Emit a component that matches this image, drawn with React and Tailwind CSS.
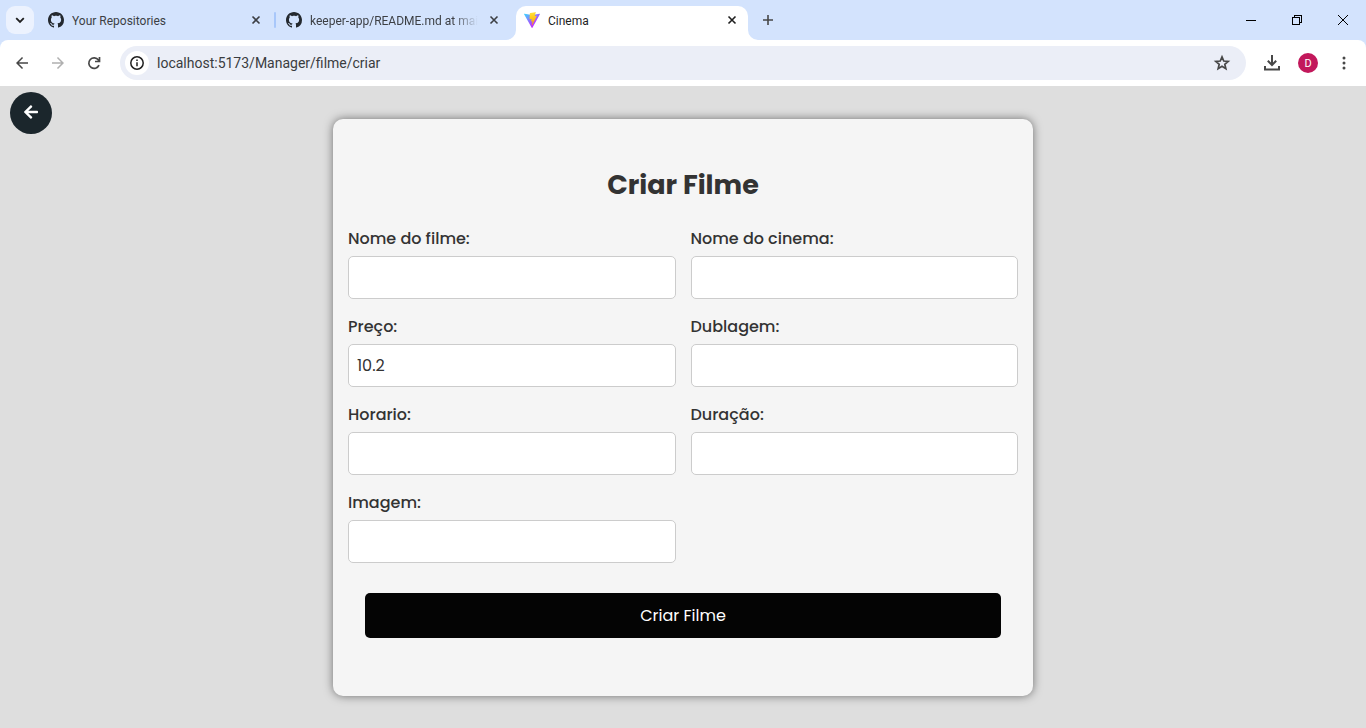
import { useState } from "react";
import { FaArrowLeft } from "react-icons/fa";
import { MdArrowBack, MdArrowForward } from "react-icons/md";

function GithubMark() {
  return (
    <svg viewBox="0 0 16 16" className="size-4 shrink-0" fill="#24292f" aria-hidden="true">
      <path d="M8 0C3.58 0 0 3.58 0 8c0 3.54 2.29 6.53 5.47 7.59.4.07.55-.17.55-.38 0-.19-.01-.82-.01-1.49-2.01.37-2.53-.49-2.69-.94-.09-.23-.48-.94-.82-1.13-.28-.15-.68-.52-.01-.53.63-.01 1.08.58 1.23.82.72 1.21 1.87.87 2.33.66.07-.52.28-.87.51-1.07-1.78-.2-3.64-.89-3.64-3.95 0-.87.31-1.59.82-2.15-.08-.2-.36-1.02.08-2.12 0 0 .67-.21 2.2.82.64-.18 1.32-.27 2-.27.68 0 1.36.09 2 .27 1.53-1.04 2.2-.82 2.2-.82.44 1.1.16 1.92.08 2.12.51.56.82 1.27.82 2.15 0 3.07-1.87 3.75-3.65 3.95.29.25.54.73.54 1.48 0 1.07-.01 1.93-.01 2.2 0 .21.15.46.55.38A8.013 8.013 0 0 0 16 8c0-4.42-3.58-8-8-8z" />
    </svg>
  );
}

function ViteLogo() {
  return (
    <svg viewBox="0 0 256 257" className="size-4 shrink-0" aria-hidden="true">
      <defs>
        <linearGradient id="vite-body" x1="-.828%" x2="57.636%" y1="7.652%" y2="78.411%">
          <stop offset="0%" stopColor="#41D1FF" />
          <stop offset="100%" stopColor="#BD34FE" />
        </linearGradient>
        <linearGradient id="vite-bolt" x1="43.376%" x2="50.316%" y1="2.242%" y2="89.03%">
          <stop offset="0%" stopColor="#FFEA83" />
          <stop offset="8.333%" stopColor="#FFDD35" />
          <stop offset="100%" stopColor="#FFA800" />
        </linearGradient>
      </defs>
      <path
        fill="url(#vite-body)"
        d="M255.153 37.938L134.897 252.976c-2.483 4.44-8.862 4.466-11.382.048L.875 37.958c-2.746-4.814 1.371-10.646 6.827-9.67l120.385 21.517a6.537 6.537 0 0 0 2.322-.004l117.867-21.483c5.438-.991 9.574 4.796 6.877 9.62Z"
      />
      <path
        fill="url(#vite-bolt)"
        d="M185.432.063L96.44 17.501a3.268 3.268 0 0 0-2.634 3.014l-5.474 92.456a3.268 3.268 0 0 0 3.997 3.378l24.777-5.718c2.318-.535 4.413 1.507 3.936 3.838l-7.361 36.047c-.495 2.426 1.782 4.5 4.151 3.78l15.304-4.649c2.372-.72 4.652 1.36 4.15 3.788l-11.698 56.621c-.732 3.542 3.979 5.473 5.943 2.437l1.313-2.028l72.516-144.72c1.215-2.423-.88-5.186-3.54-4.672l-25.505 4.922c-2.396.462-4.435-1.77-3.759-4.114l16.646-57.705c.677-2.35-1.37-4.583-3.769-4.113Z"
      />
    </svg>
  );
}

function CloseIcon() {
  return (
    <svg viewBox="0 0 16 16" className="size-4" fill="none" stroke="currentColor" strokeWidth="1.6" aria-hidden="true">
      <path d="M4.5 4.5l7 7M11.5 4.5l-7 7" />
    </svg>
  );
}

function Flare({ className }) {
  return (
    <svg viewBox="0 0 10 10" className={className} fill="#ffffff" aria-hidden="true">
      <path d="M10 0v10H0A10 10 0 0 0 10 0z" />
    </svg>
  );
}

function BrowserTab({ icon, title, active = false, fade = false }) {
  return (
    <div
      className={
        active
          ? "relative flex h-[34px] w-[232px] items-center rounded-t-[10px] bg-white px-2 pb-1.5 text-[#1f1f1f]"
          : "flex h-[34px] w-[232px] items-center px-2 pb-1.5 text-[#3c3f44]"
      }
    >
      {active && <Flare className="absolute bottom-0 -left-2.5 size-2.5" />}
      {active && <Flare className="absolute -right-2.5 bottom-0 size-2.5 -scale-x-100" />}
      {icon}
      <span
        className={
          fade
            ? "ml-2 flex-1 overflow-hidden pt-px text-xs whitespace-nowrap [mask-image:linear-gradient(to_right,black_85%,transparent)]"
            : "ml-2 flex-1 overflow-hidden pt-px text-xs whitespace-nowrap"
        }
      >
        {title}
      </span>
      <button type="button" aria-label="Fechar guia" className="ml-2 flex size-4 items-center justify-center">
        <CloseIcon />
      </button>
    </div>
  );
}

function TabStrip() {
  return (
    <div className="flex h-10 items-end bg-[#d3e3fd] pl-1.5">
      <button
        type="button"
        aria-label="Pesquisar guias"
        className="mr-1.5 mb-1.5 flex size-7 items-center justify-center rounded-[9px] bg-[#ecf2fe] text-[#1f1f1f]"
      >
        <svg viewBox="0 0 16 16" className="size-4" fill="none" stroke="currentColor" strokeWidth="1.8" aria-hidden="true">
          <path d="M4.2 6.2L8 10l3.8-3.8" />
        </svg>
      </button>
      <BrowserTab icon={<GithubMark />} title="Your Repositories" />
      <div className="mx-0.5 mb-3 h-4 w-0.5 rounded-full bg-[#a8c7fa]" />
      <BrowserTab icon={<GithubMark />} title="keeper-app/README.md at mai" fade />
      <div className="w-1.5" />
      <BrowserTab icon={<ViteLogo />} title="Cinema" active />
      <button type="button" aria-label="Nova guia" className="mb-1.5 ml-1.5 flex size-7 items-center justify-center text-[#474747]">
        <svg viewBox="0 0 16 16" className="size-4" fill="none" stroke="currentColor" strokeWidth="1.6" aria-hidden="true">
          <path d="M8 3v10M3 8h10" />
        </svg>
      </button>
      <div className="ml-auto flex self-stretch text-black">
        <button type="button" aria-label="Minimizar" className="flex w-[46px] items-center justify-center">
          <svg viewBox="0 0 10 10" className="size-2.5" fill="none" stroke="currentColor" shapeRendering="crispEdges" aria-hidden="true">
            <path d="M0 5.5h10" />
          </svg>
        </button>
        <button type="button" aria-label="Restaurar" className="flex w-[46px] items-center justify-center">
          <svg viewBox="0 0 10 10" className="size-2.5" fill="none" stroke="currentColor" shapeRendering="crispEdges" aria-hidden="true">
            <path d="M.5 2.5h7v7h-7zM2.5 2.5v-2h7v7h-2" />
          </svg>
        </button>
        <button type="button" aria-label="Fechar" className="flex w-[46px] items-center justify-center">
          <svg viewBox="0 0 10 10" className="size-2.5" fill="none" stroke="currentColor" aria-hidden="true">
            <path d="M0 0l10 10M10 0L0 10" />
          </svg>
        </button>
      </div>
    </div>
  );
}

function Toolbar() {
  return (
    <div className="bg-[#d3e3fd]">
      <div className="flex h-[46px] items-center rounded-t-lg bg-white pr-1 pl-1 text-[#474747]">
        <button type="button" aria-label="Voltar" className="flex size-9 items-center justify-center">
          <MdArrowBack className="size-[18px]" />
        </button>
        <button type="button" aria-label="Avançar" className="flex size-9 items-center justify-center text-[#b0b0b0]">
          <MdArrowForward className="size-[18px]" />
        </button>
        <button type="button" aria-label="Recarregar" className="flex size-9 items-center justify-center">
          <svg viewBox="0 0 16 16" className="size-4" fill="none" stroke="currentColor" strokeWidth="1.7" aria-hidden="true">
            <path d="M13 10.2A5.3 5.3 0 1 1 12.4 5L13.6 6.3M13.5 2v4.5H9" />
          </svg>
        </button>
        <div className="ml-2 flex h-[34px] flex-1 items-center rounded-full bg-[#ebeef7] pr-3.5 pl-[5px]">
          <button
            type="button"
            aria-label="Informações do site"
            className="flex size-6 items-center justify-center rounded-full bg-white text-[#1f1f1f]"
          >
            <svg viewBox="0 0 16 16" className="size-4" fill="none" stroke="currentColor" strokeWidth="1.5" aria-hidden="true">
              <circle cx="8" cy="8" r="6.2" />
              <path d="M8 7.2v4M8 4.6v1.5" />
            </svg>
          </button>
          <input
            type="text"
            aria-label="Endereço"
            defaultValue="localhost:5173/Manager/filme/criar"
            className="ml-2 min-w-0 flex-1 bg-transparent text-sm text-[#3a3c40] outline-none"
          />
          <button type="button" aria-label="Adicionar aos favoritos" className="flex size-5 items-center justify-center">
            <svg viewBox="0 0 18 18" className="size-[18px]" fill="none" stroke="currentColor" strokeWidth="1.7" aria-hidden="true">
              <path d="M9 2.9l1.75 4.1 4.45.4-3.4 2.9 1.05 4.35L9 12.3l-3.85 2.35L6.2 10.3 2.8 7.4l4.45-.4z" />
            </svg>
          </button>
        </div>
        <button type="button" aria-label="Downloads" className="ml-2 flex size-9 items-center justify-center">
          <svg viewBox="0 0 18 18" className="size-[18px]" fill="none" stroke="currentColor" strokeWidth="2" aria-hidden="true">
            <path d="M9 1v9.5M4.8 6.8L9 11l4.2-4.2M2 12v3.5h14V12" />
          </svg>
        </button>
        <button type="button" aria-label="Perfil" className="flex size-9 items-center justify-center">
          <span className="flex size-5 items-center justify-center rounded-full bg-[#c2185b] font-[Roboto,sans-serif] text-[11px] leading-none text-white">
            D
          </span>
        </button>
        <button type="button" aria-label="Menu" className="flex size-9 items-center justify-center">
          <svg viewBox="0 0 16 16" className="size-4" fill="currentColor" aria-hidden="true">
            <circle cx="8" cy="3" r="1.5" />
            <circle cx="8" cy="8" r="1.5" />
            <circle cx="8" cy="13" r="1.5" />
          </svg>
        </button>
      </div>
    </div>
  );
}

const FIELDS = [
  { id: "nome", label: "Nome do filme:" },
  { id: "cinema", label: "Nome do cinema:" },
  { id: "preco", label: "Preço:" },
  { id: "dublagem", label: "Dublagem:" },
  { id: "horario", label: "Horario:" },
  { id: "duracao", label: "Duração:" },
  { id: "imagem", label: "Imagem:" },
];

function MovieForm() {
  const [values, setValues] = useState({ preco: "10.2" });
  return (
    <form
      onSubmit={(event) => event.preventDefault()}
      className="w-full max-w-[700px] rounded-[10px] bg-[#f5f5f5] px-[15px] pt-[45px] pb-[58px] text-[#333333] shadow-[0_0_10px_rgba(0,0,0,0.5)]"
    >
      <h1 className="mb-[21px] text-center text-[27px] leading-[42px] font-bold">Criar Filme</h1>
      <div className="grid grid-cols-2 gap-x-[15px] gap-y-4">
        {FIELDS.map(({ id, label }) => (
          <div key={id} className="flex flex-col gap-[5px]">
            <label htmlFor={id} className="text-base leading-6 font-medium">
              {label}
            </label>
            <input
              id={id}
              type="text"
              value={values[id] ?? ""}
              onChange={(event) => setValues({ ...values, [id]: event.target.value })}
              className="h-[43px] w-full rounded-[5px] border border-[#cccccc] bg-white px-2 text-base"
            />
          </div>
        ))}
      </div>
      <button type="submit" className="mx-auto mt-[30px] block h-[45px] w-[95%] rounded-[5px] bg-[#040404] text-base text-white">
        Criar Filme
      </button>
    </form>
  );
}

export default function App() {
  return (
    <div className="flex min-h-screen flex-col bg-[#dedede]">
      <header className="font-['Segoe_UI',Roboto,sans-serif]">
        <TabStrip />
        <Toolbar />
      </header>
      <main className="relative flex flex-1 items-start justify-center px-4 pt-[33px] pb-8 font-[Poppins,Inter,sans-serif]">
        <a
          href="#voltar"
          aria-label="Voltar para a lista"
          className="absolute top-1.5 left-2.5 flex size-[42px] items-center justify-center rounded-full bg-[#1b262c] pb-[3px] text-white"
        >
          <FaArrowLeft className="size-4" />
        </a>
        <MovieForm />
      </main>
    </div>
  );
}
